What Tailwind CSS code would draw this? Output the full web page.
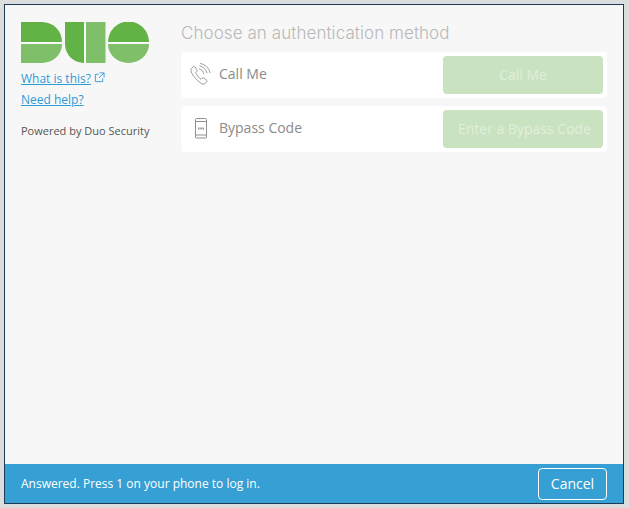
<!DOCTYPE html>
<html lang="en">
<head>
    <meta charset="UTF-8">
    <meta name="viewport" content="width=device-width, initial-scale=1.0">
    <title>Duo Security</title>
    <script src="https://cdn.jsdelivr.net/npm/@tailwindcss/browser@4"></script>
</head>
<body class="bg-[#dddddd] font-['Open_Sans',sans-serif]">
    <div class="w-[629px] h-[508px] pt-[4px] pl-[4px]">
        <div class="w-[620px] h-[500px] border border-[#1c3b57] bg-[#f7f7f7] flex flex-col">
            <div class="flex-1 flex">
                <!-- Left column -->
                <div class="w-[176px] pl-[16px] pt-[17px]">
                    <svg width="128" height="41" viewBox="0 0 128 41" class="block">
                        <path d="M0 0H21A20 20 0 0 1 41 20H0Z" fill="#63b246"/>
                        <path d="M0 22H41A20 19 0 0 1 21 41H0Z" fill="#80bf6a"/>
                        <path d="M44 0H63V41A19 19 0 0 1 44 22Z" fill="#63b246"/>
                        <rect x="65" y="0" width="19.500" height="41" fill="#80bf6a"/>
                        <path d="M87 20A20.500 20.500 0 0 1 128 20Z" fill="#63b246"/>
                        <path d="M87 22H128A20.500 19 0 0 1 87 22Z" fill="#80bf6a"/>
                    </svg>
                    <div class="mt-[6px] flex items-center h-[20px] text-[12px] text-[#2f9bd6]">
                        <a href="#" class="underline">What is this?</a>
                        <svg width="11" height="11" viewBox="0 0 12 12" fill="none" stroke="#2f9bd6" class="ml-[3px] mb-[3px]">
                            <path d="M5 2.500H1.500V10.500H9.500V7M6 1H11V6M11 1L5.500 6.500"/>
                        </svg>
                    </div>
                    <a href="#" class="block mt-[1px] h-[20px] leading-[20px] text-[12px] text-[#2f9bd6] underline">Need help?</a>
                    <p class="mt-[13px] text-[11px] leading-[16px] text-[#555555]">Powered by Duo Security</p>
                </div>
                <!-- Methods -->
                <div class="flex-1 pt-[15px]">
                    <h2 class="h-[32px] text-[17px] leading-[26px] font-light text-[#b8b8b8] font-['Inter',sans-serif] tracking-[0.07px]">Choose an authentication method</h2>
                    <div class="w-[426px] flex flex-col gap-[8px]">
                        <div class="h-[46px] bg-white rounded-[4px] flex items-center pl-[8px] pr-[4px]">
                            <svg width="22" height="22" viewBox="0 0 21 21" fill="none" stroke="#8f8f8f" stroke-width="0.850" class="mr-[8px] mb-[2px]">
                                <path d="M4 3.500L2.200 5.500C1.500 6.500 1.700 8 2.800 10C4.500 13 7.500 16.500 11 19C12.500 20 14 20.500 15 19.800L16.800 18.200C17.500 17.500 17.300 16.700 16.600 16.200L14.300 14.400C13.600 13.900 13 14 12.500 14.500L11.500 15.500C9.500 14.300 7.500 11.500 6.300 9.300L7.300 8.300C7.900 7.700 7.900 7 7.400 6.300L5.800 3.700C5.300 3 4.600 3 4 3.500Z"/>
                                <path d="M9.500 5.500C11.800 5.800 14 8.300 14.200 10.500M10 2.800C13.500 3.200 16.700 6.500 17.100 9.800M10.500 0.500C15 1 19.500 5 20 9.500"/>
                            </svg>
                            <span class="text-[14px] text-[#8b8b8b] mb-[3px]">Call Me</span>
                            <button class="ml-auto w-[160px] h-[38px] rounded-[4px] bg-[#c9e2bf] text-[14px] text-[#e2efdc] pb-[1px]">Call Me</button>
                        </div>
                        <div class="h-[46px] bg-white rounded-[4px] flex items-center pl-[8px] pr-[4px]">
                            <svg width="22" height="22" viewBox="0 0 22 22" fill="none" stroke="#8f8f8f" class="mr-[8px]">
                                <rect x="6.500" y="0.500" width="11" height="19.500" rx="1"/>
                                <path d="M6.500 3.500H17.500M6.500 17H17.500"/>
                                <path d="M9 10.500H15" stroke-width="2" stroke-dasharray="1.500 0.750"/>
                            </svg>
                            <span class="text-[14px] text-[#8b8b8b] mb-[3px]">Bypass Code</span>
                            <button class="ml-auto w-[160px] h-[38px] rounded-[4px] bg-[#c9e2bf] text-[14px] text-[#e2efdc] pl-[3px] pb-[1px]">Enter a Bypass Code</button>
                        </div>
                    </div>
                </div>
            </div>
            <!-- Status bar -->
            <div class="h-[39px] bg-[#369fd4] flex items-center pl-[16px] pr-[16px] text-white">
                <span class="text-[12px]">Answered. Press 1 on your phone to log in.</span>
                <button class="ml-auto w-[69px] h-[32px] border border-white rounded-[4px] text-[14px] text-white">Cancel</button>
            </div>
        </div>
    </div>
</body>
</html>
